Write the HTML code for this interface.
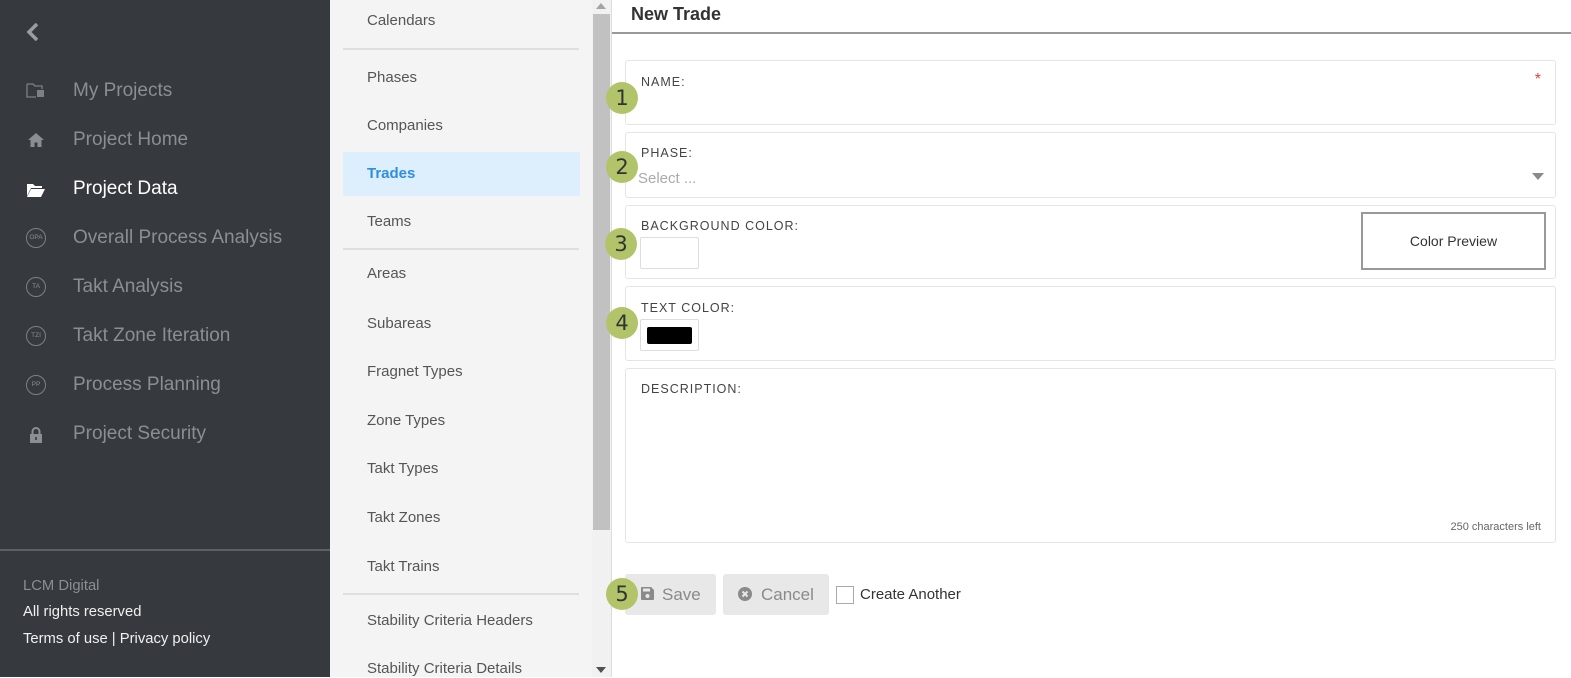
<!DOCTYPE html>
<html><head><meta charset="utf-8"><style>
*{margin:0;padding:0;box-sizing:border-box}
body{width:1571px;height:677px;overflow:hidden;font-family:"Liberation Sans",Arial,sans-serif;background:#fff;position:relative}
.a{position:absolute}
#side{left:0;top:0;width:330px;height:677px;background:#36393e}
.nav{position:absolute;left:73px;font-size:19px;color:#8b8e92;line-height:24px;transform:translateY(-12px)}
.ic{position:absolute;left:26px;width:20px;height:20px;transform:translateY(-10px)}
.circ{border:1px solid #7d8084;border-radius:50%;color:#8b8e92;font-size:6.5px;text-align:center;line-height:18px}
#mid{left:330px;top:0;width:262px;height:677px;background:#f4f4f4}
.mi{position:absolute;left:37px;font-size:15px;color:#555;line-height:18px;transform:translateY(-9px)}
.div{position:absolute;left:13px;width:236px;height:2px;background:#dfdfdf}
.card{position:absolute;left:625px;width:931px;border:1px solid #e5e5e5;border-radius:3px;background:#fff}
.lbl{position:absolute;left:15px;font-size:12.5px;letter-spacing:1px;color:#444}
.badge{position:absolute;width:32px;height:32px;border-radius:50%;background:#b2c46a;color:#333;font-size:21px;text-align:center;line-height:32px;font-family:"DejaVu Sans","Liberation Sans",sans-serif}
.btn{position:absolute;top:574px;height:41px;background:#e8e8e8;border-radius:3px;color:#8a8a8a;font-size:17px;line-height:41px}
</style></head><body>
<div id="side" class="a">
 <svg class="a" style="left:26px;top:22px" width="14" height="20" viewBox="0 0 14 20"><path d="M11 2 L3 10 L11 18" stroke="#9a9da1" stroke-width="3.5" fill="none"/></svg>
 <svg class="ic" style="top:91px" viewBox="0 0 20 20"><path d="M1 3h6l2 2h7v3" stroke="#7d8084" stroke-width="1.3" fill="none"/><path d="M1 3v13h9" stroke="#7d8084" stroke-width="1.3" fill="none"/><rect x="11" y="9" width="7" height="7" fill="#7d8084"/></svg>
 <div class="nav" style="top:91px">My Projects</div>
 <svg class="ic" style="top:140px" viewBox="0 0 20 20"><path d="M10 3 L2 10 H4.5 V17 H8.5 V12.5 H11.5 V17 H15.5 V10 H18 Z" fill="#8b8e92"/></svg>
 <div class="nav" style="top:140px">Project Home</div>
 <svg class="ic" style="top:190px" viewBox="0 0 20 20"><path d="M1 4h6l2 2h7v2H5L1 16z" fill="#fff"/><path d="M5 9h14l-4 8H1z" fill="#fff"/></svg>
 <div class="nav" style="top:189px;color:#fff">Project Data</div>
 <div class="ic circ" style="top:238px">OPA</div>
 <div class="nav" style="top:238px">Overall Process Analysis</div>
 <div class="ic circ" style="top:287px">TA</div>
 <div class="nav" style="top:287px">Takt Analysis</div>
 <div class="ic circ" style="top:336px">TZI</div>
 <div class="nav" style="top:336px">Takt Zone Iteration</div>
 <div class="ic circ" style="top:385px">PP</div>
 <div class="nav" style="top:385px">Process Planning</div>
 <svg class="ic" style="top:435px" viewBox="0 0 20 20"><path d="M6.5 9V6.5a3.5 3.5 0 0 1 7 0V9" stroke="#8b8e92" stroke-width="2" fill="none"/><rect x="4" y="9" width="12" height="9" fill="#8b8e92"/><rect x="9.2" y="12" width="1.6" height="3" fill="#36393e"/></svg>
 <div class="nav" style="top:434px">Project Security</div>
 <div class="a" style="left:0;top:549px;width:330px;height:2px;background:#5d6064"></div>
 <div class="a" style="left:23px;top:578px;font-size:14.8px;color:#8b8e92">LCM Digital</div>
 <div class="a" style="left:23px;top:604px;font-size:14.8px;color:#f0f0f0">All rights reserved</div>
 <div class="a" style="left:23px;top:631px;font-size:14.8px;color:#f0f0f0">Terms of use | Privacy policy</div>
</div>
<div id="mid" class="a">
 <div class="mi" style="top:21px">Calendars</div>
 <div class="div" style="top:48px"></div>
 <div class="mi" style="top:78px">Phases</div>
 <div class="mi" style="top:126px">Companies</div>
 <div class="a" style="left:13px;top:152px;width:237px;height:44px;background:#ddeefc;border-radius:2px"></div>
 <div class="mi" style="top:174px;color:#2f8ee3;font-weight:bold">Trades</div>
 <div class="mi" style="top:222px">Teams</div>
 <div class="div" style="top:248px"></div>
 <div class="mi" style="top:274px">Areas</div>
 <div class="mi" style="top:324px">Subareas</div>
 <div class="mi" style="top:372px">Fragnet Types</div>
 <div class="mi" style="top:421px">Zone Types</div>
 <div class="mi" style="top:469px">Takt Types</div>
 <div class="mi" style="top:518px">Takt Zones</div>
 <div class="mi" style="top:567px">Takt Trains</div>
 <div class="div" style="top:593px"></div>
 <div class="mi" style="top:621px">Stability Criteria Headers</div>
 <div class="mi" style="top:669px">Stability Criteria Details</div>
</div>
<div class="a" style="left:592px;top:0;width:19px;height:677px;background:#f1f1f1"></div>
<div class="a" style="left:593px;top:14px;width:17px;height:516px;background:#c1c1c1"></div>
<svg class="a" style="left:596px;top:3px" width="10" height="6"><path d="M0 6L5 0L10 6z" fill="#a3a3a3"/></svg>
<svg class="a" style="left:596px;top:667px" width="10" height="6"><path d="M0 0L5 6L10 0z" fill="#505050"/></svg>
<div class="a" style="left:611px;top:0;width:1px;height:677px;background:#ddd"></div>

<div class="a" style="left:631px;top:4px;font-size:18px;font-weight:bold;color:#333">New Trade</div>
<div class="a" style="left:612px;top:32px;width:959px;height:2px;background:#999"></div>

<div class="card" style="top:60px;height:65px"><div class="lbl" style="top:14px">NAME:</div><div class="a" style="right:14px;top:10px;color:#e0413a;font-size:16px">*</div></div>
<div class="card" style="top:132px;height:66px"><div class="lbl" style="top:13px">PHASE:</div><div class="a" style="left:12px;top:37px;font-size:15px;color:#aaa">Select ...</div><svg class="a" style="left:906px;top:40px" width="12" height="7"><path d="M0 0H12L6 7z" fill="#8a8a8a"/></svg></div>
<div class="card" style="top:205px;height:74px"><div class="lbl" style="top:13px">BACKGROUND COLOR:</div><div class="a" style="left:14px;top:31px;width:59px;height:32px;border:1px solid #ddd;border-radius:2px"></div><div class="a" style="left:735px;top:6px;width:185px;height:58px;border:2px solid #999;font-size:14px;color:#333;text-align:center;line-height:54px">Color Preview</div></div>
<div class="card" style="top:286px;height:75px"><div class="lbl" style="top:14px">TEXT COLOR:</div><div class="a" style="left:14px;top:32px;width:59px;height:32px;border:1px solid #ddd;border-radius:2px"><div class="a" style="left:6px;top:7px;width:45px;height:17px;background:#000;border-radius:2px"></div></div></div>
<div class="card" style="top:368px;height:175px"><div class="lbl" style="top:13px">DESCRIPTION:</div><div class="a" style="right:14px;top:152px;font-size:11px;color:#666">250 characters left</div></div>

<div class="btn" style="left:625px;width:91px"><svg class="a" style="left:16px;top:13px" width="13" height="13" viewBox="0 0 13 13"><path d="M0 1a1 1 0 0 1 1-1h9l3 3v9a1 1 0 0 1-1 1H1a1 1 0 0 1-1-1z" fill="#8a8a8a"/><rect x="2" y="1.5" width="7" height="3" fill="#e8e8e8"/><circle cx="6.5" cy="9" r="2" fill="#e8e8e8"/></svg><span class="a" style="left:37px">Save</span></div>
<div class="btn" style="left:723px;width:106px"><svg class="a" style="left:15px;top:13px" width="14" height="14" viewBox="0 0 14 14"><circle cx="7" cy="7" r="7" fill="#8a8a8a"/><path d="M4.5 4.5L9.5 9.5M9.5 4.5L4.5 9.5" stroke="#e8e8e8" stroke-width="2"/></svg><span class="a" style="left:38px">Cancel</span></div>
<div class="a" style="left:836px;top:586px;width:18px;height:18px;border:1px solid #aaa;background:#fff"></div>
<div class="a" style="left:860px;top:586px;font-size:15px;color:#333">Create Another</div>

<div class="badge" style="left:606px;top:82px">1</div>
<div class="badge" style="left:606px;top:151px">2</div>
<div class="badge" style="left:605px;top:228px">3</div>
<div class="badge" style="left:606px;top:307px">4</div>
<div class="badge" style="left:606px;top:578px">5</div>
</body></html>
